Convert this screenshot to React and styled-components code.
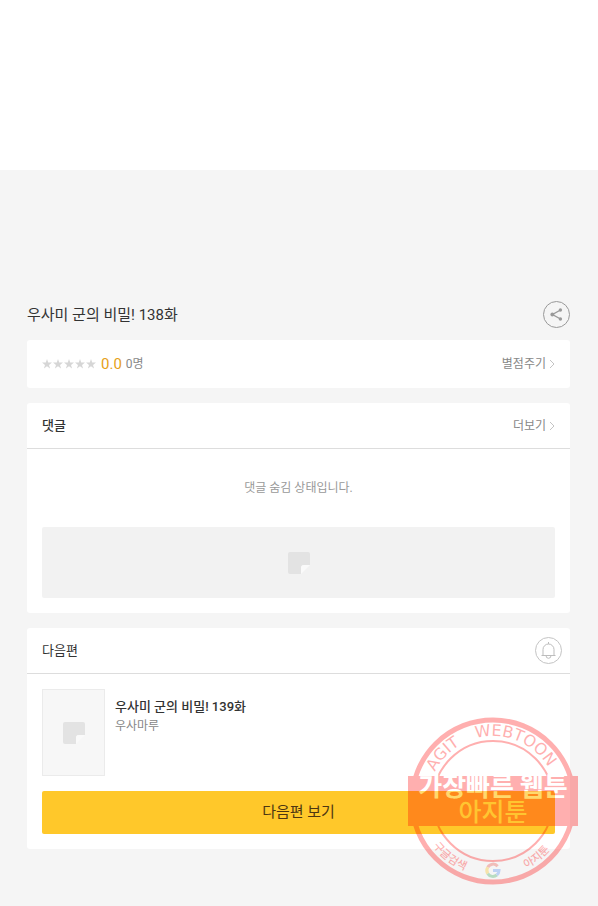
import React from 'react';
import styled, { createGlobalStyle } from 'styled-components';

const STAMP_RED = '#ff0000';

export default function App() {
  return (
    <>
      <GlobalStyle />
      <Viewer />
      <Main>
        <TitleRow>
          <Title>우사미 군의 비밀! 138화</Title>
          <RoundButton type="button" aria-label="공유" $color="#999">
            <ShareIcon />
          </RoundButton>
        </TitleRow>

        <Card>
          <RatingRow>
            <Rating>
              <Stars />
              <Score>0.0</Score>
              <Count>0명</Count>
            </Rating>
            <MoreLink href="#rate">
              별점주기
              <Chevron />
            </MoreLink>
          </RatingRow>
        </Card>

        <Card>
          <CardHeader>
            <CardTitle $weight={500}>댓글</CardTitle>
            <MoreLink href="#comments">
              더보기
              <Chevron />
            </MoreLink>
          </CardHeader>
          <CommentBody>
            <Message>댓글 숨김 상태입니다.</Message>
            <Banner>
              <NoteIcon />
            </Banner>
          </CommentBody>
        </Card>

        <Card>
          <CardHeader $tight>
            <CardTitle $weight={400}>다음편</CardTitle>
            <RoundButton type="button" aria-label="알림" $color="#c4c4c4">
              <BellIcon />
            </RoundButton>
          </CardHeader>
          <NextBody>
            <Episode>
              <Thumb>
                <NoteIcon />
              </Thumb>
              <EpisodeText>
                <EpisodeTitle>우사미 군의 비밀! 139화</EpisodeTitle>
                <Author>우사마루</Author>
              </EpisodeText>
            </Episode>
            <NextButton type="button">다음편 보기</NextButton>
          </NextBody>
        </Card>
      </Main>
      <Stamp />
    </>
  );
}

function Stars() {
  return (
    <svg width="55" height="12" viewBox="0 0 55 12" fill="#d6d6d6" aria-hidden="true">
      {[0, 1, 2, 3, 4].map((n) => (
        <path
          key={n}
          transform={`translate(${n * 11} 0)`}
          d="M5 1l1.200 3.600H10L7 6.900l1.100 3.600L5 8.300l-3.100 2.200L3 6.900 0 4.600h3.800z"
        />
      ))}
    </svg>
  );
}

function Chevron() {
  return (
    <svg width="6" height="10" viewBox="0 0 6 10" fill="none" stroke="#c4c4c4" aria-hidden="true">
      <path d="M1 1l4 4-4 4" />
    </svg>
  );
}

function ShareIcon() {
  return (
    <svg width="13" height="13" viewBox="0 0 13 13" fill="#999" stroke="#999" aria-hidden="true">
      <path d="M10.500 2L2.500 6.500l8 4.500" fill="none" strokeWidth="1.4" />
      <circle cx="10.400" cy="2" r="1.700" stroke="none" />
      <circle cx="2.300" cy="6.500" r="1.900" stroke="none" />
      <circle cx="10.400" cy="11" r="1.700" stroke="none" />
    </svg>
  );
}

function BellIcon() {
  return (
    <svg width="17" height="17" viewBox="0 0 17 17" fill="none" stroke="#bdbdbd" aria-hidden="true">
      <path d="M1.500 13.500h14M3 13.500V7.500a5.500 5.500 0 0 1 11 0v6M8.500 2V0M6 13.500a2.500 2.800 0 0 0 5 0" />
    </svg>
  );
}

function NoteIcon() {
  return (
    <svg width="22" height="22" viewBox="0 0 22 22" aria-hidden="true">
      <path d="M2 0h18a2 2 0 0 1 2 2v11h-6a3 3 0 0 0-3 3v6H2a2 2 0 0 1-2-2V2a2 2 0 0 1 2-2z" fill="#e3e3e3" />
      <path d="M16 13h6l-9 9v-6a3 3 0 0 1 3-3z" fill="#fafafa" />
    </svg>
  );
}

function Stamp() {
  return (
    <StampSvg width="170" height="168" viewBox="0 0 170 168">
      <defs>
        <path id="arcTop" d="M20 84a65 65 0 0 1 130 0" />
        <path id="arcBottom" d="M10 84a75 75 0 0 0 150 0" />
        <clipPath id="outsideBand">
          <path d="M0 0h170v59H0zM0 109h170v59H0z" />
        </clipPath>
      </defs>
      <g opacity="0.31">
        <g fill="none" stroke={STAMP_RED} clipPath="url(#outsideBand)">
          <circle cx="85" cy="84" r="81" strokeWidth="5" />
          <circle cx="85" cy="84" r="60" strokeWidth="2" />
        </g>
        <path d="M0 59h170v50H0z" fill={STAMP_RED} />
        <ArcText $size={16}>
          <textPath href="#arcTop" startOffset="24%" textAnchor="middle">AGIT</textPath>
        </ArcText>
        <ArcText $size={16}>
          <textPath href="#arcTop" startOffset="62%" textAnchor="middle">WEBTOON</textPath>
        </ArcText>
        <ArcText $size={11} $weight={500}>
          <textPath href="#arcBottom" startOffset="29%" textAnchor="middle">구글검색</textPath>
        </ArcText>
        <ArcText $size={11} $weight={500}>
          <textPath href="#arcBottom" startOffset="71%" textAnchor="middle">아지툰</textPath>
        </ArcText>
        <g fill="none" strokeWidth="3">
          <path d="M89.600 149.200a6 6 0 0 0-9.800 1" stroke="#ea4335" />
          <path d="M79.800 150.200a6 6 0 0 0 0 6.400" stroke="#fbbc05" />
          <path d="M79.800 156.600a6 6 0 0 0 9 1.400" stroke="#34a853" />
          <path d="M88.800 158a6 6 0 0 0 2.200-4.500h-6" stroke="#4285f4" />
        </g>
        <BandText x="85" y="79" $size={26} $weight={700} $color="#fff">가장빠른 웹툰</BandText>
        <BandText x="85" y="104" $size={25} $weight={500} $color="#ffc040">아지툰</BandText>
      </g>
    </StampSvg>
  );
}

const GlobalStyle = createGlobalStyle`
* {
  box-sizing: border-box;
}
body {
  margin: 0;
  background: #f5f5f5;
  color: #333;
  font-family: Roboto, "Noto Sans CJK KR", sans-serif;
}
h1, h2, h3, p {
  margin: 0;
}
`;
const Viewer = styled.div`
height: 170px;
background: #fff;
`;
const Main = styled.main`
display: flex;
flex-direction: column;
gap: 15px;
padding: 131px 28px 56px 27px;
`;
const TitleRow = styled.div`
display: flex;
align-items: center;
justify-content: space-between;
height: 27px;
margin-bottom: -3px;
`;
const Title = styled.h1`
font-size: 15px;
font-weight: 400;
line-height: 24px;
`;
const RoundButton = styled.button`
display: flex;
align-items: center;
justify-content: center;
width: 27px;
height: 27px;
padding: 0;
background: none;
border: 1px solid ${(props) => props.$color};
border-radius: 50%;
cursor: pointer;
`;
const Card = styled.section`
background: #fff;
border-radius: 3px;
`;
const RatingRow = styled.div`
display: flex;
align-items: center;
justify-content: space-between;
height: 48px;
padding: 0 15px;
`;
const Rating = styled.div`
display: flex;
align-items: center;
gap: 4px;
`;
const Score = styled.span`
color: #e6a117;
font-size: 15px;
line-height: 20px;
`;
const Count = styled.span`
color: #888;
font-size: 12px;
line-height: 20px;
`;
const MoreLink = styled.a`
display: flex;
align-items: center;
gap: 3px;
color: #888;
font-size: 12px;
line-height: 20px;
text-decoration: none;
`;
const CardHeader = styled.div`
display: flex;
align-items: center;
justify-content: space-between;
height: 46px;
padding: 0 ${(props) => (props.$tight ? '8px' : '15px')} 0 15px;
border-bottom: 1px solid #ddd;
`;
const CardTitle = styled.h2`
font-size: 13px;
font-weight: ${(props) => props.$weight};
line-height: 20px;
`;
const CommentBody = styled.div`
padding: 29px 15px 15px;
`;
const Message = styled.p`
margin-bottom: 29px;
color: #999;
font-size: 12px;
line-height: 20px;
text-align: center;
`;
const Banner = styled.div`
display: flex;
align-items: center;
justify-content: center;
height: 71px;
background: #f2f2f2;
border-radius: 2px;
`;
const NextBody = styled.div`
padding: 15px;
`;
const Episode = styled.div`
display: flex;
gap: 10px;
margin-bottom: 15px;
`;
const Thumb = styled.div`
display: flex;
align-items: center;
justify-content: center;
width: 63px;
height: 87px;
background: #f7f7f7;
border: 1px solid #ebebeb;
`;
const EpisodeText = styled.div`
padding-top: 8px;
`;
const EpisodeTitle = styled.h3`
font-size: 13px;
font-weight: 500;
line-height: 20px;
`;
const Author = styled.p`
color: #888;
font-size: 12px;
line-height: 18px;
`;
const NextButton = styled.button`
display: block;
width: 100%;
height: 43px;
padding: 0 0 4px;
background: #ffc82a;
border: none;
border-radius: 2px;
color: #4d3612;
font-family: inherit;
font-size: 15px;
cursor: pointer;
`;
const StampSvg = styled.svg`
position: absolute;
top: 717px;
right: 20px;
overflow: visible;
pointer-events: none;
`;
const ArcText = styled.text`
fill: ${STAMP_RED};
font-family: "DejaVu Sans", "Noto Sans CJK KR", sans-serif;
font-size: ${(props) => props.$size}px;
font-weight: ${(props) => props.$weight || 400};
`;
const BandText = styled.text`
fill: ${(props) => props.$color};
font-family: "Noto Sans CJK KR", sans-serif;
font-size: ${(props) => props.$size}px;
font-weight: ${(props) => props.$weight};
text-anchor: middle;
`;
